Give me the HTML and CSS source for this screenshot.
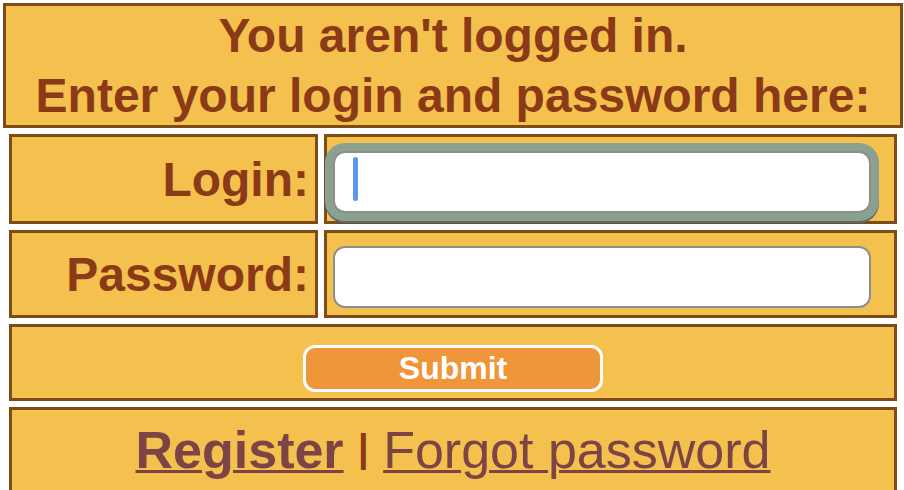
FILE: index.html
```html
<!DOCTYPE html>
<html lang="en">
<head>
    <meta charset="UTF-8">
    <meta name="viewport" content="width=device-width, initial-scale=1.0">
    <title>Login</title>
    <link rel="stylesheet" href="styles.css">
</head>
<body>
    <div class="notice">
        You aren't logged in.<br>
        Enter your login and password here:
    </div>

    <!-- Login form -->
    <form class="login-form" onsubmit="return false;">
        <table class="form-table">
            <tr class="row-login">
                <td class="label-cell"><label for="login">Login:</label></td>
                <td class="field-cell">
                    <span class="field-wrap">
                        <input type="text" id="login" class="field focused">
                        <span class="caret"></span>
                    </span>
                </td>
            </tr>
            <tr class="row-password">
                <td class="label-cell"><label for="password">Password:</label></td>
                <td class="field-cell">
                    <span class="field-wrap">
                        <input type="password" id="password" class="field">
                    </span>
                </td>
            </tr>
            <tr class="row-submit">
                <td colspan="2" class="submit-cell">
                    <button type="submit" class="submit-btn">Submit</button>
                </td>
            </tr>
            <tr class="row-links">
                <td colspan="2" class="links-cell">
                    <a href="#" class="link link-register">Register</a>
                    <span class="sep">|</span>
                    <a href="#" class="link">Forgot password</a>
                </td>
            </tr>
        </table>
    </form>
</body>
</html>
```

FILE: styles.css
```css
body {
    font-family: "Liberation Sans", Arial, sans-serif;
    margin: 3px 1px 0 3px;
    background-color: #fff;
    color: #8b3a17;
}
.notice {
    background-color: #f4c14f;
    border: 3px solid #7d4c17;
    text-align: center;
    font-weight: bold;
    font-size: 48px;
    line-height: 59.5px;
}
.login-form {
    margin: 0;
}
.form-table {
    width: 100%;
    border-spacing: 6px;
    margin-top: 0;
}
.form-table td {
    background-color: #f4c14f;
    border: 3px solid #7d4c17;
    padding: 0;
}
.row-login {
    height: 90px;
}
.row-password {
    height: 88px;
}
.row-submit {
    height: 77px;
}
.label-cell {
    width: 297px;
    text-align: right;
    padding-right: 6px !important;
    font-size: 48px;
    font-weight: bold;
    vertical-align: middle;
}
.field-cell {
    vertical-align: middle;
    padding: 5px 0 0 6px !important;
    line-height: 0;
}
.field-wrap {
    position: relative;
    display: inline-block;
    vertical-align: middle;
}
.field {
    display: block;
    box-sizing: border-box;
    width: 538px;
    height: 62px;
    margin: 0;
    border: 2px solid #8e8e8e;
    border-radius: 12px;
    background: #fff;
    outline: none;
    font-size: 30px;
    font-family: inherit;
    padding: 0 20px;
}
.field.focused {
    box-shadow: 0 0 0 8px #8ca08e, 0 2px 0 8px #56687c;
}
.caret {
    position: absolute;
    left: 20px;
    top: 6px;
    width: 5px;
    height: 44px;
    border-radius: 3px;
    background-color: #5d96f2;
}
.submit-cell {
    text-align: center;
    vertical-align: top;
    padding-top: 18px !important;
    line-height: 0;
}
.submit-btn {
    width: 300px;
    height: 47px;
    border: 3px solid #fff;
    border-radius: 12px;
    background-color: #f0963a;
    color: #fff;
    font-family: inherit;
    font-size: 32px;
    font-weight: bold;
    line-height: normal;
    padding: 0;
    cursor: pointer;
}
.links-cell {
    text-align: center;
    padding-top: 10px !important;
    padding-bottom: 20px !important;
    font-size: 52px;
}
.link {
    color: #7c4444;
    text-decoration-thickness: 3px;
}
.link-register {
    font-weight: bold;
}
.sep {
    font-weight: bold;
    font-size: 38px;
    vertical-align: 7px;
    color: #8b3a17;
}
```
